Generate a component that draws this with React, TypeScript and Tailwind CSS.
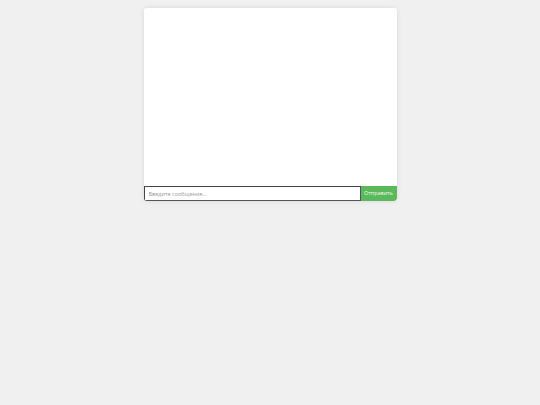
import React from 'react';

const App: React.FC = () => {
  return (
    <div className="min-h-screen w-full bg-[#f0f0f0] pt-2" style={{ fontFamily: '"Open Sans", "Liberation Sans", sans-serif' }}>
      <div className="mx-auto flex w-[253px] flex-col overflow-hidden rounded-[3px] bg-white shadow-[0_0_5px_rgba(0,0,0,0.1)]">
        {/* Сообщения */}
        <div className="h-[178px] bg-white" />

        {/* Ввод */}
        <div className="flex h-[15px]">
          <input
            type="text"
            autoFocus
            placeholder="Введите сообщение..."
            className="h-full min-w-0 flex-1 border border-[#555] border-t-[#444] border-l-[#444] bg-white px-[4px] text-[5.5px] text-[#333] outline-none placeholder:text-[#999]"
          />
          <button className="h-full w-[36px] rounded-br-[3px] bg-[#5cb85c] text-[5.5px] text-[#eafbe9]">
            Отправить
          </button>
        </div>
      </div>
    </div>
  );
};

export default App;
